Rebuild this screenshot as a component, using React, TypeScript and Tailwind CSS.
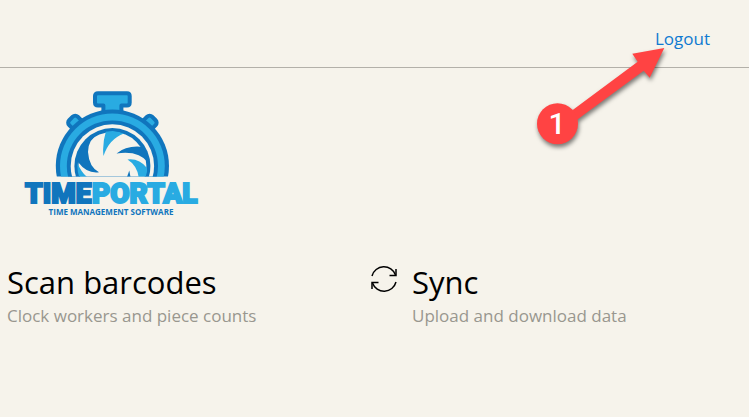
import { ReactNode } from "react";

interface MenuItemProps {
    title: string,
    description: string,
    icon?: ReactNode;
}

const Logo = () => {
    return (
        <svg viewBox="0 0 180 128" role="img" aria-label="TimePortal" className="w-45 h-32">
            <defs>
                <clipPath id="watch">
                    <rect x="0" y="0" width="180" height="86.4" />
                </clipPath>
                <clipPath id="dial">
                    <circle cx="89.4" cy="76" r="35" />
                </clipPath>
            </defs>
            <g clipPath="url(#watch)">
                <g fill="#29abe2" stroke="#1075bd" strokeWidth="4" strokeLinejoin="round">
                    <rect x="-6" y="-5" width="12" height="14" rx="3.5" transform="translate(51.5 32) rotate(-45)" />
                    <rect x="-6" y="-5" width="12" height="14" rx="3.5" transform="translate(127.3 32) rotate(45)" />
                    <path d="M75 3.2H104Q106.7 3.2 106.7 6V12.5Q106.7 15.5 104 15.5H98.4V26H80.4V15.5H75Q72 15.5 72 12.5V6Q72 3.2 75 3.2Z" />
                </g>
                <circle cx="89.4" cy="76" r="56.6" fill="#1075bd" />
                <circle cx="89.4" cy="76" r="52.4" fill="#29abe2" />
                <circle cx="89.4" cy="76" r="45.6" fill="#1075bd" />
                <circle cx="89.4" cy="76" r="41.7" fill="#f6f3eb" />
                <circle cx="89.4" cy="76" r="38" fill="#1075bd" />
                <circle cx="89.4" cy="76" r="34" fill="#f6f3eb" />
                <g clipPath="url(#dial)">
                    <path d="M83 41Q79 54 80.5 66Q86 49 101 43.5Q92 40 83 41Z" fill="#29abe2" />
                    <path d="M93.5 63.5Q104 55 120 57L126 74Q117 60 93.5 63.5Z" fill="#1075bd" />
                    <path d="M104.5 69.5Q116 68 124 78V90H116Q115 76 104.5 69.5Z" fill="#29abe2" />
                    <path d="M104 87L106.3 80.5L107.5 87Z" fill="#1075bd" />
                    <path d="M77 43Q65 49 65 62Q66 77 76 82.3Q64 84 55 72L50 60L66 44Z" fill="#1075bd" />
                    <path d="M54 72Q58 82 64 87H54Z" fill="#29abe2" />
                </g>
            </g>
            <g className="font-['Roboto'] font-black" fontSize="28" strokeWidth="2">
                <text x="2" y="113" fill="#1075bd" stroke="#1075bd">TIME</text>
                <text x="69" y="113" fill="#29abe2" stroke="#29abe2">PORTAL</text>
            </g>
            <text x="88" y="125" textAnchor="middle" fontSize="8" fill="#1075bd" className="font-['Open_Sans'] font-bold">
                TIME MANAGEMENT SOFTWARE
            </text>
        </svg>
    );
};

const SyncIcon = () => {
    return (
        <svg viewBox="0 0 26 26" aria-hidden="true" className="w-[26px] h-[26px] mt-0.5" fill="none" stroke="#000" strokeWidth="1.5">
            <path d="M1 10A12.3 12.3 0 0 1 24.5 9" />
            <path d="M25 3V9.5H18.5" />
            <path d="M25 16A12.3 12.3 0 0 1 1.5 17" />
            <path d="M1 23V16.5H7.5" />
        </svg>
    );
};

const StepMarker = () => {
    return (
        <svg viewBox="0 0 140 115" aria-label="Step 1" className="absolute top-10 right-[78px] w-[140px] h-[115px] pointer-events-none">
            <g fill="#ff4343" className="drop-shadow-[1px_3px_2px_rgba(0,0,0,0.5)]">
                <path d="M133.3 8L101.3 13.7L106.7 21.7L37 73.5L43 82L112.7 30.7L118.7 37.7Z" />
                <circle cx="26.5" cy="83.7" r="20.5" />
            </g>
            <text x="26" y="94" textAnchor="middle" fontSize="30" fill="#fff" className="font-['Roboto'] font-medium">1</text>
        </svg>
    );
};

const MenuItem = (props: MenuItemProps) => {
    const {title, description, icon} = props;

    return (
        <button type="button" className="flex items-start gap-[15px] text-left cursor-pointer">
            {icon}
            <span className="flex flex-col">
                <span className="text-[31px] leading-9 text-black">{title}</span>
                <span className="mt-1 text-[17px] leading-6 text-[#99978f]">{description}</span>
            </span>
        </button>
    );
};

const App = () => {
    return (
        <div className="min-h-screen bg-[#f6f3eb] font-['Open_Sans','Noto_Sans',sans-serif]">
            <header className="relative flex justify-end items-center h-17 pt-2.5 pr-[39px] border-b border-[#b3b0a9]">
                <a href="#logout" className="text-[17px] leading-6 text-[#0f7ad1]">Logout</a>
                <StepMarker />
            </header>
            <main>
                <div className="pt-[22px] pl-[23px]">
                    <Logo />
                </div>
                <nav className="grid grid-cols-2 mt-[46px] pl-[7px] pr-[14px]">
                    <MenuItem title="Scan barcodes" description="Clock workers and piece counts" />
                    <MenuItem title="Sync" description="Upload and download data" icon={<SyncIcon />} />
                </nav>
            </main>
        </div>
    );
};

export default App;
